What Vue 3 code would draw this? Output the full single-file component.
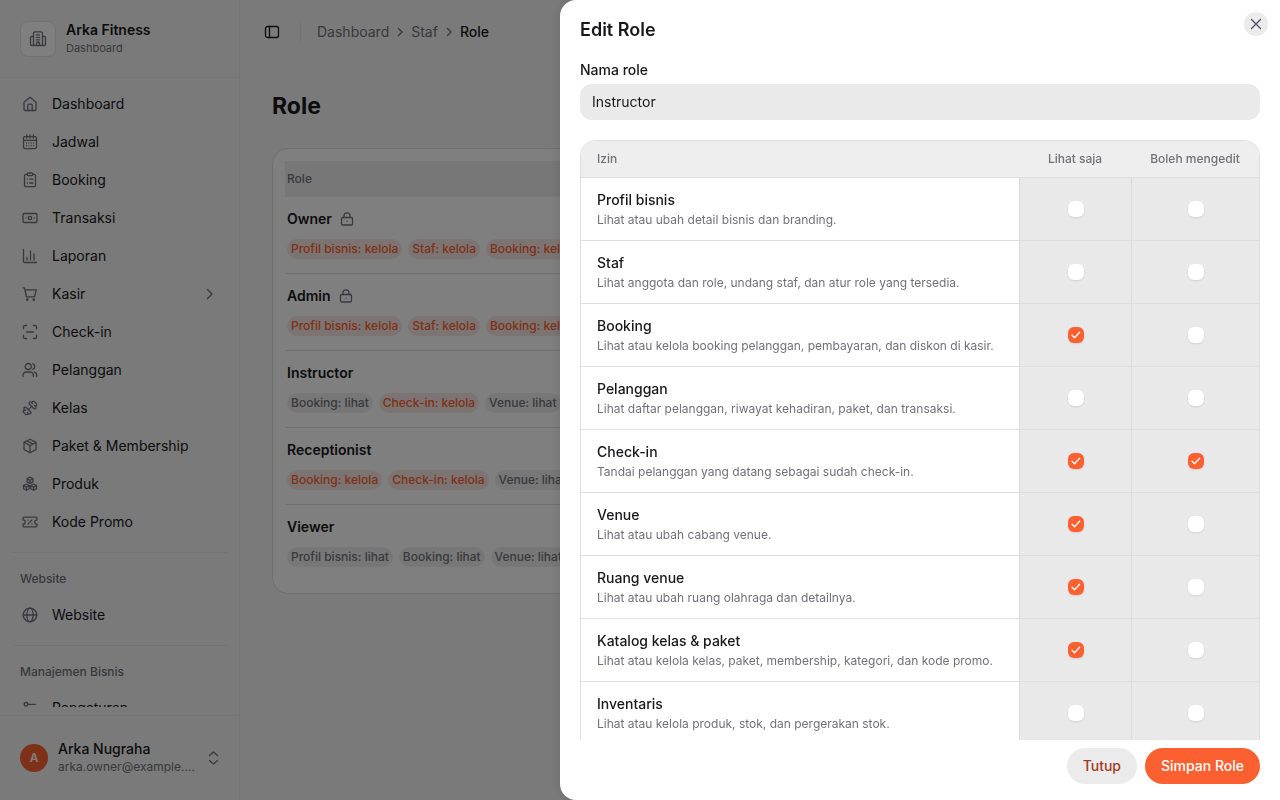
<script setup>
import { ref } from 'vue'

const nav = [
  { label: 'Dashboard', icon: 'home' },
  { label: 'Jadwal', icon: 'calendar' },
  { label: 'Booking', icon: 'clipboard' },
  { label: 'Transaksi', icon: 'banknote' },
  { label: 'Laporan', icon: 'chart' },
  { label: 'Kasir', icon: 'cart', more: true },
  { label: 'Check-in', icon: 'scan' },
  { label: 'Pelanggan', icon: 'users' },
  { label: 'Kelas', icon: 'dumbbell' },
  { label: 'Paket & Membership', icon: 'package' },
  { label: 'Produk', icon: 'boxes' },
  { label: 'Kode Promo', icon: 'ticket' }
]

const groups = [
  { items: nav },
  { title: 'Website', items: [{ label: 'Website', icon: 'globe' }] },
  { title: 'Manajemen Bisnis', items: [{ label: 'Pengaturan', icon: 'settings' }] }
]

const icons = {
  home: '<path d="M2 6.2 8 1.3l6 4.9v7.1a1.2 1.2 0 0 1-1.2 1.2H3.2A1.2 1.2 0 0 1 2 13.300z"/><path d="M5.800 14.500V9.200a1 1 0 0 1 1-1h2.400a1 1 0 0 1 1 1v5.300"/>',
  calendar: '<rect x="1.500" y="2.600" width="13" height="12" rx="1.500"/><path d="M1.500 6.300h13M4.700 1v3M8 1v3M11.300 1v3"/><path d="M4.500 9h.01M6.900 9h.01M9.200 9h.01M11.500 9h.01M4.500 11.700h.01M6.900 11.700h.01M9.200 11.700h.01M11.500 11.700h.01"/>',
  clipboard: '<path d="M5.500 2.300H3.800a1.300 1.300 0 0 0-1.300 1.300v9.800a1.300 1.300 0 0 0 1.300 1.300h8.400a1.300 1.300 0 0 0 1.300-1.300V3.600a1.300 1.300 0 0 0-1.300-1.300h-1.700"/><rect x="5.300" y="1" width="5.400" height="2.700" rx="1"/><path d="M5.300 7.200h.01M5.300 11h.01M7.700 7.200h3.200M7.700 11h3.200"/>',
  banknote: '<rect x="1" y="3.500" width="14" height="9" rx="1.300"/><circle cx="8" cy="8" r="1.700"/><path d="M3.800 8h.01M12.200 8h.01"/>',
  chart: '<path d="M1.500 1.500v11.800a1.200 1.200 0 0 0 1.200 1.200h11.800M5 9.500V12M8.500 3v9M12 6v6"/>',
  cart: '<path d="M1 1.800h1.500l2 9h8l1.800-7H3"/><circle cx="5.300" cy="13.700" r=".7"/><circle cx="11.800" cy="13.700" r=".7"/>',
  scan: '<path d="M1.500 4.800V2.700a1.200 1.200 0 0 1 1.200-1.200h2M11.300 1.500h2a1.200 1.200 0 0 1 1.200 1.200v2.100M14.500 11.200v2.100a1.200 1.200 0 0 1-1.200 1.200h-2M4.700 14.500h-2a1.200 1.200 0 0 1-1.200-1.200v-2.100M4.500 8h7"/>',
  users: '<circle cx="6.200" cy="4.500" r="3"/><path d="M1 14.500v-1.300A3.200 3.200 0 0 1 4.200 10h4a3.200 3.200 0 0 1 3.200 3.200v1.300M10.800 1.700a3 3 0 0 1 0 5.600M12.300 10.200a3.100 3.100 0 0 1 2.400 3v1.300"/>',
  dumbbell: '<g transform="scale(.6667)" stroke-width="1.900"><path d="M17.600 12.770a2 2 0 1 0 2.830-2.830l-1.770-1.770a2 2 0 0 0 2.830-2.830l-2.830-2.830a2 2 0 0 0-2.830 2.830l-1.770-1.770a2 2 0 1 0-2.830 2.830z"/><path d="M5.340 21.490a2 2 0 1 0 2.830-2.830l1.770 1.770a2 2 0 1 0 2.830-2.830l-6.370-6.370a2 2 0 1 0-2.830 2.830l1.770 1.770a2 2 0 0 0-2.830 2.830z"/><path d="m9.600 14.400 4.800-4.800"/></g>',
  package: '<path d="m8 1.200 6 3.200v7.200l-6 3.200-6-3.200V4.400zM2.200 4.500 8 7.600l5.800-3.100M8 7.600v7M5 2.900l5.900 3.200"/>',
  boxes: '<path d="m8 1.200 2.900 1.500v3.100L8 7.300 5.100 5.800V2.700zM4.400 8l2.900 1.500v3.200l-2.900 1.600-2.900-1.600V9.500zM11.600 8l2.900 1.500v3.200l-2.900 1.600-2.900-1.600V9.500zM5.300 3 8 4.300 10.700 3M8 4.300v3M1.700 9.700l2.700 1.400 2.700-1.400M4.400 11.100v3M8.900 9.700l2.700 1.400 2.700-1.400M11.600 11.100v3"/>',
  ticket: '<path d="M1 4.500A1.300 1.300 0 0 1 2.300 3.200h11.400A1.300 1.300 0 0 1 15 4.500v1.300a2.200 2.200 0 0 0 0 4.400v1.300a1.300 1.300 0 0 1-1.300 1.300H2.300A1.300 1.300 0 0 1 1 11.500v-1.300a2.200 2.200 0 0 0 0-4.400zM10 5.900 6 10.100M6 6.200h.01M10 9.900h.01"/>',
  globe: '<circle cx="8" cy="8" r="6.800"/><ellipse cx="8" cy="8" rx="3.100" ry="6.800"/><path d="M1.300 8h13.400"/>',
  settings: '<circle cx="4" cy="4.300" r="1.800"/><path d="M6 4.300h7.500"/><circle cx="12" cy="11.700" r="1.800"/><path d="M2.500 11.700H10"/>'
}

const roles = [
  { name: 'Owner', locked: true, chips: ['Profil bisnis: kelola', 'Staf: kelola', 'Booking: kelola'] },
  { name: 'Admin', locked: true, chips: ['Profil bisnis: kelola', 'Staf: kelola', 'Booking: kelola'] },
  { name: 'Instructor', chips: ['Booking: lihat', 'Check-in: kelola', 'Venue: lihat'] },
  { name: 'Receptionist', chips: ['Booking: kelola', 'Check-in: kelola', 'Venue: lihat'] },
  { name: 'Viewer', chips: ['Profil bisnis: lihat', 'Booking: lihat', 'Venue: lihat'] }
]

const roleName = ref('Instructor')
const permissions = ref([
  { name: 'Profil bisnis', text: 'Lihat atau ubah detail bisnis dan branding.', view: false, edit: false },
  { name: 'Staf', text: 'Lihat anggota dan role, undang staf, dan atur role yang tersedia.', view: false, edit: false },
  { name: 'Booking', text: 'Lihat atau kelola booking pelanggan, pembayaran, dan diskon di kasir.', view: true, edit: false },
  { name: 'Pelanggan', text: 'Lihat daftar pelanggan, riwayat kehadiran, paket, dan transaksi.', view: false, edit: false },
  { name: 'Check-in', text: 'Tandai pelanggan yang datang sebagai sudah check-in.', view: true, edit: true },
  { name: 'Venue', text: 'Lihat atau ubah cabang venue.', view: true, edit: false },
  { name: 'Ruang venue', text: 'Lihat atau ubah ruang olahraga dan detailnya.', view: true, edit: false },
  { name: 'Katalog kelas & paket', text: 'Lihat atau kelola kelas, paket, membership, kategori, dan kode promo.', view: true, edit: false },
  { name: 'Inventaris', text: 'Lihat atau kelola produk, stok, dan pergerakan stok.', view: false, edit: false }
])
</script>

<template>
  <div class="app">
    <aside class="sidebar">
      <header class="brand">
        <span class="brand-logo">
          <svg class="icon brand-icon" viewBox="0 0 18 18">
            <path d="M4.500 15.500V3.300a1.500 1.500 0 0 1 1.500-1.500h6a1.500 1.500 0 0 1 1.500 1.500v12.200M4.500 6.500H2.800a1.300 1.300 0 0 0-1.300 1.300v6.400a1.300 1.300 0 0 0 1.300 1.300h12.400a1.300 1.300 0 0 0 1.300-1.300V7.800a1.300 1.300 0 0 0-1.300-1.300h-1.700M7.500 15.500v-2a1.500 1.500 0 0 1 3 0v2M7.300 4.800h3.400M7.300 7.300h3.400M7.300 9.800h3.400" />
          </svg>
        </span>
        <div class="brand-text">
          <strong>Arka Fitness</strong>
          <span>Dashboard</span>
        </div>
      </header>
      <nav class="nav">
        <section v-for="(g, i) in groups" :key="i" class="nav-group">
          <h2 v-if="g.title">{{ g.title }}</h2>
          <a v-for="n in g.items" :key="n.label" href="#" class="nav-item">
            <svg class="icon" viewBox="0 0 16 16" v-html="icons[n.icon]"></svg>
            <span>{{ n.label }}</span>
            <svg v-if="n.more" class="icon chevron" viewBox="0 0 16 16"><path d="m6.500 3.500 4.500 4.500-4.500 4.500" /></svg>
          </a>
        </section>
      </nav>
      <button type="button" class="account">
        <span class="avatar">A</span>
        <span class="account-text">
          <b>Arka Nugraha</b>
          <span>arka.owner@example.com</span>
        </span>
        <svg class="icon" viewBox="0 0 16 16"><path d="M4.500 5.500 8.500 2l4 3.500M4.500 10.500l4 3.500 4-3.500" /></svg>
      </button>
    </aside>

    <main class="main">
      <header class="topbar">
        <button type="button" class="toggle" aria-label="Sidebar">
          <svg class="icon" viewBox="0 0 16 16"><rect x="1.500" y="2.500" width="13" height="11" rx="2" /><path d="M5.500 2.500v11" /></svg>
        </button>
        <span class="divider"></span>
        <nav class="crumbs">
          <a href="#">Dashboard</a>
          <svg class="icon" viewBox="0 0 12 12"><path d="m4.500 2.500 3.500 3.500-3.500 3.500" /></svg>
          <a href="#">Staf</a>
          <svg class="icon" viewBox="0 0 12 12"><path d="m4.500 2.500 3.500 3.500-3.500 3.500" /></svg>
          <span class="current">Role</span>
        </nav>
      </header>
      <h1>Role</h1>
      <div class="card">
        <table class="roles">
          <thead><tr><th>Role</th></tr></thead>
          <tbody>
            <tr v-for="r in roles" :key="r.name">
              <td>
                <div class="role-name">
                  <span>{{ r.name }}</span>
                  <svg v-if="r.locked" class="icon lock" viewBox="0 0 14 14">
                    <rect x="1.500" y="5.500" width="11" height="7.500" rx="1.200" /><path d="M4 5.500V3.800a3 3 0 0 1 6 0v1.700M7 9.200h.01" />
                  </svg>
                </div>
                <div class="chips">
                  <span v-for="c in r.chips" :key="c" class="chip" :class="{ manage: c.endsWith('kelola') }">{{ c }}</span>
                </div>
              </td>
            </tr>
          </tbody>
        </table>
      </div>
    </main>

    <div class="backdrop">
      <form class="drawer" role="dialog" aria-labelledby="drawer-title" @submit.prevent>
        <header class="drawer-head">
          <h2 id="drawer-title">Edit Role</h2>
          <button type="button" class="close" aria-label="Close">
            <svg class="icon" viewBox="0 0 16 16"><path d="m3.500 3.500 9 9m0-9-9 9" /></svg>
          </button>
        </header>
        <div class="drawer-body">
          <label class="field-label" for="role-name">Nama role</label>
          <input id="role-name" v-model="roleName" class="field" type="text" />
          <div class="perm-box">
            <table class="perms">
              <colgroup><col /><col class="col-view" /><col class="col-edit" /></colgroup>
              <thead>
                <tr><th>Izin</th><th>Lihat saja</th><th>Boleh mengedit</th></tr>
              </thead>
              <tbody>
                <tr v-for="p in permissions" :key="p.name">
                  <td>
                    <div class="perm-name">{{ p.name }}</div>
                    <div class="perm-text">{{ p.text }}</div>
                  </td>
                  <td v-for="k in ['view', 'edit']" :key="k" class="tick">
                    <label class="check">
                      <input v-model="p[k]" type="checkbox" :aria-label="p.name + (k === 'view' ? ': Lihat saja' : ': Boleh mengedit')" />
                      <svg v-if="p[k]" viewBox="0 0 16 16"><path d="m4 8.200 2.600 2.600 5-5.600" /></svg>
                    </label>
                  </td>
                </tr>
              </tbody>
            </table>
          </div>
        </div>
        <footer class="drawer-foot">
          <button type="button" class="btn secondary">Tutup</button>
          <button type="submit" class="btn primary">Simpan Role</button>
        </footer>
      </form>
    </div>
  </div>
</template>

<style>
html, body { margin: 0; overflow: hidden; }
</style>

<style scoped>
.app, .app * { box-sizing: border-box; }
.app {
  display: flex;
  height: 100vh;
  overflow: hidden;
  background: #f5f5f5;
  color: #18181b;
  font: 14px/20px Inter, "Liberation Sans", sans-serif;
}
.app :deep(svg) { display: block; flex: none; }
.app button, .app input { font: inherit; }
.icon {
  width: 16px;
  height: 16px;
  fill: none;
  stroke: currentColor;
  stroke-width: 1.3;
  stroke-linecap: round;
  stroke-linejoin: round;
}
a { color: inherit; text-decoration: none; }

.sidebar {
  display: flex;
  flex-direction: column;
  flex: none;
  width: 240px;
  border-right: 1px solid #e9e9ea;
}
.brand {
  display: flex;
  align-items: center;
  gap: 10px;
  height: 78px;
  padding: 0 20px;
  border-bottom: 1px solid #e9e9ea;
}
.brand-logo {
  display: grid;
  place-items: center;
  width: 36px;
  height: 36px;
  border: 1px solid #e4e4e7;
  border-radius: 8px;
  background: #fff;
  color: #71717a;
}
.brand-icon { width: 18px; height: 18px; }
.brand-text { display: flex; flex-direction: column; }
.brand-text strong { line-height: 18px; font-weight: 600; }
.brand-text span { font-size: 11px; line-height: 18px; color: #71717a; }
.nav { flex: 1; overflow: hidden; margin-bottom: 8px; padding: 8px 12px 0; }
.nav-group { display: flex; flex-direction: column; gap: 2px; }
.nav-group + .nav-group { margin-top: 12px; padding-top: 12px; border-top: 1px solid #e6e6e7; }
.nav-group h2 {
  margin: 0;
  padding: 4px 8px 6px;
  font-size: 12px;
  line-height: 20px;
  font-weight: 500;
  color: #71717a;
}
.nav-item { display: flex; align-items: center; gap: 14px; height: 36px; padding: 0 10px; }
.nav-item .icon { color: #71717a; }
.nav-item .chevron { margin-left: auto; }
.account {
  display: flex;
  align-items: center;
  gap: 10px;
  height: 85px;
  padding: 0 18px 0 20px;
  border: 0;
  border-top: 1px solid #e6e6e7;
  background: none;
  color: inherit;
  text-align: left;
}
.account .icon { color: #71717a; }
.avatar {
  display: grid;
  place-items: center;
  flex: none;
  width: 28px;
  height: 28px;
  border-radius: 50%;
  background: #fd6030;
  color: #fff;
  font-size: 12px;
  font-weight: 600;
}
.account-text { display: flex; flex: 1; flex-direction: column; min-width: 0; }
.account-text b { font-weight: 500; line-height: 18px; }
.account-text span {
  overflow: hidden;
  font-size: 12px;
  line-height: 18px;
  color: #71717a;
  text-overflow: ellipsis;
  white-space: nowrap;
}

.main { flex: 1; min-width: 0; padding: 0 32px; }
.topbar { display: flex; align-items: center; height: 64px; margin-left: -8px; }
.toggle { padding: 0; border: 0; background: none; color: inherit; }
.divider { width: 1px; height: 20px; margin: 0 16px 0 20px; background: #e9e9ea; }
.crumbs { display: flex; align-items: center; gap: 5px; color: #71717a; }
.crumbs .icon { width: 12px; height: 12px; }
.crumbs .current { color: #18181b; font-weight: 500; }
h1 { margin: 25px 0; font-size: 23px; line-height: 34px; font-weight: 700; }
.card { padding: 12px 12px 11px; border: 1px solid #dedee0; border-radius: 16px; background: #fff; overflow: hidden; }
.roles { width: 100%; border-collapse: separate; border-spacing: 0; }
.roles th {
  height: 36px;
  padding: 0 2px;
  background: #efeff0;
  font-size: 12px;
  font-weight: 500;
  text-align: left;
  color: #71717a;
}
.roles td { height: 77px; padding: 12px 2px; border-bottom: 1px solid #dedee0; vertical-align: top; }
.roles tr:last-child td { border-bottom-color: transparent; }
.role-name { display: flex; align-items: center; gap: 8px; margin-bottom: 10px; font-weight: 600; }
.lock { width: 14px; height: 14px; color: #71717a; }
.chips { display: flex; gap: 6px; }
.chip {
  flex: none;
  padding: 0 4px;
  border-radius: 10px;
  background: #efeff0;
  color: #71717a;
  font-size: 12px;
  font-weight: 500;
}
.chip.manage { background: #f9e9e4; color: #fd6030; }

.backdrop {
  position: fixed;
  inset: 0;
  display: flex;
  justify-content: flex-end;
  background: rgba(0, 0, 0, 0.5);
}
.drawer {
  display: flex;
  flex-direction: column;
  width: 720px;
  max-width: 100%;
  border-radius: 16px 0 0 16px;
  background: #fff;
  box-shadow: 0 0 12px rgba(0, 0, 0, 0.12);
}
.drawer-head { display: flex; justify-content: space-between; height: 60px; padding: 12px 12px 0 20px; }
.drawer-head h2 { margin: 0; padding-top: 6px; font-size: 18px; line-height: 24px; font-weight: 600; }
.close {
  display: grid;
  place-items: center;
  width: 24px;
  height: 24px;
  padding: 0;
  border: 0;
  border-radius: 50%;
  background: #ebebec;
  color: #52525b;
}
.drawer-body { flex: 1; min-height: 0; overflow: hidden; padding: 0 20px; }
.field-label { display: block; margin-bottom: 4px; font-weight: 500; }
.field {
  display: block;
  width: 100%;
  height: 36px;
  margin-bottom: 20px;
  padding: 0 12px 2px;
  border: 0;
  border-radius: 12px;
  background: #eaeaea;
  color: #18181b;
}
.perm-box { border: 1px solid #dedee0; border-bottom: 0; border-radius: 16px 16px 0 0; overflow: hidden; }
.perms { width: 100%; table-layout: fixed; border-collapse: separate; border-spacing: 0; }
.col-view { width: 112px; }
.col-edit { width: 128px; }
.perms th {
  height: 37px;
  padding: 0;
  border-bottom: 1px solid #dedee0;
  background: #eeeeee;
  color: #71717a;
  font-size: 12px;
  line-height: 16px;
  font-weight: 500;
}
.perms th:first-child { padding-left: 16px; text-align: left; }
.perms td { padding: 12px 16px; border-bottom: 1px solid #dedee0; }
.perms .tick { padding: 0; border-left: 1px solid #dadadb; background: #e9e9e9; }
.perm-name { font-weight: 500; }
.perm-text { margin-top: 2px; font-size: 12px; line-height: 16px; color: #71717a; white-space: nowrap; }
.check { display: grid; place-items: center; }
.check > * { grid-area: 1 / 1; }
.check input {
  width: 16px;
  height: 16px;
  margin: 0;
  appearance: none;
  border-radius: 6px;
  background: #fff;
  box-shadow: 0 1px 2px rgba(0, 0, 0, 0.1);
}
.check input:checked { background: #fd6030; }
.check svg {
  width: 16px;
  height: 16px;
  fill: none;
  stroke: #fff;
  stroke-width: 1.3;
  stroke-linecap: round;
  stroke-linejoin: round;
  pointer-events: none;
}
.drawer-foot { display: flex; justify-content: flex-end; gap: 8px; padding: 8px 20px 16px; }
.app .btn { height: 36px; padding: 0 16px; border: 0; border-radius: 18px; font-weight: 500; }
.secondary { background: #ebebec; color: #a53a22; }
.primary { background: #fd6030; color: #fff; }
</style>
